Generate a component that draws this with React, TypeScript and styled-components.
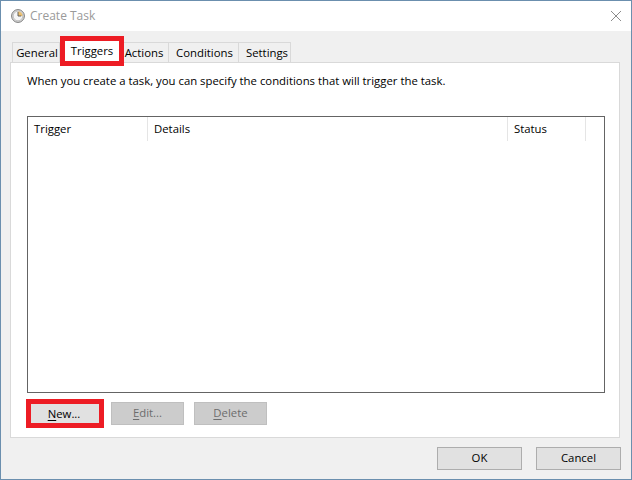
import React from "react";
import styled, { createGlobalStyle } from "styled-components";

const Global = createGlobalStyle`
  html, body { margin: 0; padding: 0; background: #f0f0f0; }
  body { font-family: "Open Sans", "Noto Sans", "Liberation Sans", sans-serif; font-size: 11.35px; color: #000; }
  * { box-sizing: border-box; }
`;

const Win = styled.div`
  width: 632px;
  height: 480px;
  border: 1px solid #6b8fae;
  background: #f0f0f0;
  display: flex;
  flex-direction: column;
  overflow: hidden;
`;

const TitleBar = styled.div`
  height: 30px;
  flex: none;
  background: #fff;
  display: flex;
  align-items: center;
  padding: 0 10px 0 10px;
`;

const TitleText = styled.span`
  margin-left: 5px;
  flex: 1;
  color: #9a9a9a;
  font-size: 12px;
  line-height: 16px;
  margin-top: -1px;
`;

const Body = styled.div`
  flex: 1;
  display: flex;
  flex-direction: column;
  padding: 11px 11px 9px 9px;
`;

const TabStrip = styled.div`
  display: flex;
  height: 20px;
  padding-left: 2px;
  position: relative;
  z-index: 1;
`;

const Tab = styled.div<{ $w: number; $pl?: number; $pr?: number; $active?: boolean }>`
  width: ${(p) => p.$w}px;
  height: 20px;
  margin-top: 0;
  padding: 0 ${(p) => p.$pr ?? 0}px 0 ${(p) => p.$pl ?? 0}px;
  background: #f0f0f0;
  border: 1px solid #d9d9d9;
  border-bottom: none;
  border-left-width: 0;
  text-align: center;
  line-height: 19px;
  white-space: nowrap;
  &:first-child { border-left-width: 1px; }
  ${(p) =>
    p.$active
      ? "background: #fff; outline: 5px solid #ed1c24; border: none; z-index: 2; margin: -1px 5px 0 5px;"
      : ""}
`;

const Panel = styled.div`
  height: 376px;
  background: #fff;
  border: 1px solid #d9d9d9;
  padding: 0 14px 0 16px;
  display: flex;
  flex-direction: column;
`;

const Intro = styled.div`
  height: 53px;
  padding-top: 10px;
  line-height: 16px;
`;

const Table = styled.div`
  height: 277px;
  width: 578px;
  border: 1px solid #646464;
  background: #fff;
`;

const Header = styled.div`
  display: flex;
  height: 24px;
`;

const Col = styled.div<{ $w: number }>`
  width: ${(p) => p.$w}px;
  border-right: 1px solid #e5e5e5;
  padding-left: 6px;
  line-height: 24px;
`;

const Row = styled.div`
  display: flex;
  align-items: center;
  margin-top: 9px;
  padding-left: 4px;
`;

const Btn = styled.div<{ $w: number; $disabled?: boolean; $last?: boolean }>`
  width: ${(p) => p.$w}px;
  height: 23px;
  margin-right: ${(p) => (p.$last ? 0 : 10)}px;
  background: ${(p) => (p.$disabled ? "#cccccc" : "#e1e1e1")};
  border: 1px solid ${(p) => (p.$disabled ? "#bfbfbf" : "#adadad")};
  color: ${(p) => (p.$disabled ? "#6d6d6d" : "#000")};
  text-align: center;
  line-height: 20px;
  u { text-underline-offset: 2px; }
`;

const NewBtn = styled.div`
  width: 68px;
  height: 19px;
  margin: 0 12px 0 0;
  padding-right: 2px;
  background: #e1e1e1;
  outline: 5px solid #ed1c24;
  text-align: center;
  line-height: 19px;
  u { text-underline-offset: 2px; }
`;

const Footer = styled.div`
  display: flex;
  justify-content: flex-end;
  gap: 14px;
  margin-top: 9px;
  margin-right: -1px;
`;

const Clock = () => (
  <svg width="14" height="14" viewBox="0 0 14 14" style={{ flex: "none" }}>
    <circle cx="7" cy="7" r="6.4" fill="#dcdcdc" stroke="#7a7a7a" />
    <circle cx="7" cy="7" r="4.8" fill="#f5f5f5" stroke="#a5a5a5" strokeWidth="0.6" />
    <path d="M7 7V2.4A4.6 4.6 0 0 1 11.6 7Z" fill="#ecc070" />
    <path d="M7 3v4h3.2" fill="none" stroke="#555" strokeWidth="0.9" />
  </svg>
);

const Close = () => (
  <svg width="10" height="10" viewBox="0 0 10 10" style={{ flex: "none" }}>
    <path d="M0 0L10 10M10 0L0 10" stroke="#8c8c8c" strokeWidth="1" fill="none" />
  </svg>
);

export default function App() {
  return (
    <>
      <Global />
      <Win>
        <TitleBar>
          <Clock />
          <TitleText>Create Task</TitleText>
          <Close />
        </TitleBar>
        <Body>
          <TabStrip>
            <Tab $w={48} $pl={2}>General</Tab>
            <Tab $w={54} $active>Triggers</Tab>
            <Tab $w={45} $pr={4}>Actions</Tab>
            <Tab $w={70} $pl={2}>Conditions</Tab>
            <Tab $w={52} $pl={5}>Settings</Tab>
          </TabStrip>
          <Panel>
            <Intro>When you create a task, you can specify the conditions that will trigger the task.</Intro>
            <Table>
              <Header>
                <Col $w={120}>Trigger</Col>
                <Col $w={360}>Details</Col>
                <Col $w={78}>Status</Col>
              </Header>
            </Table>
            <Row>
              <NewBtn><u>N</u>ew...</NewBtn>
              <Btn $w={73} $disabled><u>E</u>dit...</Btn>
              <Btn $w={73} $disabled><u>D</u>elete</Btn>
            </Row>
          </Panel>
          <Footer>
            <Btn $w={85} $last>OK</Btn>
            <Btn $w={85} $last>Cancel</Btn>
          </Footer>
        </Body>
      </Win>
    </>
  );
}
